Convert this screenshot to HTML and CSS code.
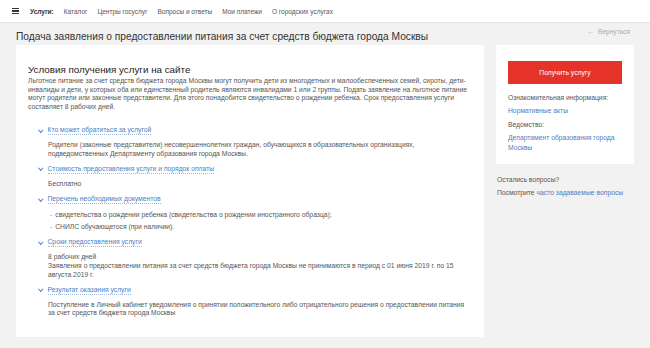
FILE: index.html
```html
<!DOCTYPE html>
<html lang="ru">

<head>
    <meta charset="UTF-8">
    <meta name="viewport" content="width=device-width, initial-scale=1.0">
    <title>Подача заявления о предоставлении питания</title>
    <link rel="stylesheet" href="styles.css">
</head>

<body>
    <div class="topbar">
        <span class="burger"><i></i><i></i><i></i></span>
        <span class="nav-title">Услуги:</span>
        <a class="nav-item">Каталог</a>
        <a class="nav-item">Центры госуслуг</a>
        <a class="nav-item">Вопросы и ответы</a>
        <a class="nav-item">Мои платежи</a>
        <a class="nav-item">О городских услугах</a>
    </div>

    <div class="page">
        <div class="page-head">
            <h1 class="page-title">Подача заявления о предоставлении питания за счет средств бюджета города Москвы</h1>
            <a class="back-link">&larr;&nbsp; Вернуться</a>
        </div>

        <div class="layout">
            <div class="card main-card">
                <h2 class="card-title">Условия получения услуги на сайте</h2>
                <p class="text">Льготное питание за счет средств бюджета города Москвы могут получить дети из многодетных и малообеспеченных семей, сироты, дети-инвалиды и дети, у которых оба или единственный родитель являются инвалидами 1 или 2 группы. Подать заявление на льготное питание могут родители или законные представители. Для этого понадобится свидетельство о рождении ребенка. Срок предоставления услуги составляет 8 рабочих дней.</p>

                <div class="sections">
                    <div class="section">
                        <a class="section-link"><span class="chevron"></span><span class="dotted">Кто может обратиться за услугой</span></a>
                        <p class="section-body">Родители (законные представители) несовершеннолетних граждан, обучающихся в образовательных организациях, подведомственных Департаменту образования города Москвы.</p>
                    </div>
                    <div class="section">
                        <a class="section-link"><span class="chevron"></span><span class="dotted">Стоимость предоставления услуги и порядок оплаты</span></a>
                        <p class="section-body">Бесплатно</p>
                    </div>
                    <div class="section">
                        <a class="section-link"><span class="chevron"></span><span class="dotted">Перечень необходимых документов</span></a>
                        <ul class="doc-list">
                            <li>свидетельства о рождении ребенка (свидетельства о рождении иностранного образца);</li>
                            <li>СНИЛС обучающегося (при наличии).</li>
                        </ul>
                    </div>
                    <div class="section">
                        <a class="section-link"><span class="chevron"></span><span class="dotted">Сроки предоставления услуги</span></a>
                        <p class="section-body">8 рабочих дней<br>Заявления о предоставлении питания за счет средств бюджета города Москвы не принимаются в период с 01 июня 2019 г. по 15 августа 2019 г.</p>
                    </div>
                    <div class="section">
                        <a class="section-link"><span class="chevron"></span><span class="dotted">Результат оказания услуги</span></a>
                        <p class="section-body">Поступление в Личный кабинет уведомления о принятии положительного либо отрицательного решения о предоставлении питания за счет средств бюджета города Москвы</p>
                    </div>
                </div>
            </div>

            <div class="aside">
                <div class="card side-card">
                    <a class="btn-red">Получить услугу</a>
                    <div class="side-label">Ознакомительная информация:</div>
                    <a class="side-link">Нормативные акты</a>
                    <div class="side-label">Ведомство:</div>
                    <a class="side-link">Департамент образования города Москвы</a>
                </div>
                <div class="faq">
                    <div>Остались вопросы?</div>
                    <div class="faq-line">Посмотрите <a class="faq-link">часто задаваемые вопросы</a></div>
                </div>
            </div>
        </div>
    </div>
</body>

</html>
```

FILE: styles.css
```css
body {
    margin: 0;
    background-color: #f2f2f2;
    font-family: "Liberation Sans", Arial, sans-serif;
    color: #333;
    height: 348px;
}

a {
    cursor: pointer;
}

.topbar {
    display: flex;
    align-items: center;
    gap: 10px;
    height: 22px;
    padding: 0 12px;
    background-color: #fff;
    border-bottom: 1px solid #e6e6e6;
    font-size: 6.5px;
}

.burger {
    display: flex;
    flex-direction: column;
    gap: 1.5px;
    width: 7px;
    margin-right: 1px;
}

.burger i {
    display: block;
    height: 1.2px;
    background-color: #333;
}

.nav-title {
    font-weight: bold;
    color: #333;
}

.nav-item {
    color: #555;
}

.page {
    padding: 0 16px;
}

.page-head {
    display: flex;
    justify-content: space-between;
    align-items: flex-start;
    height: 22px;
}

.page-title {
    margin: 7px 0 0;
    font-size: 10.2px;
    line-height: 14px;
    font-weight: normal;
    color: #333;
}

.back-link {
    margin: 5px 4px 0 0;
    font-size: 6.6px;
    color: #aaa;
}

.layout {
    display: grid;
    grid-template-columns: 468px 138px;
    gap: 12px;
    align-items: start;
}

.card {
    background-color: #fff;
}

.main-card {
    padding: 18px 12px 19px;
}

.card-title {
    margin: 0;
    font-size: 9.8px;
    line-height: 13px;
    font-weight: normal;
    color: #222;
}

.text {
    margin: 1px 0 0;
    font-size: 6.75px;
    line-height: 8.7px;
    color: #555;
}

.sections {
    padding-left: 10px;
    margin-top: 14px;
}

.section {
    margin-top: 6.5px;
}

.section-link {
    display: flex;
    align-items: center;
    font-size: 6.75px;
    line-height: 9px;
    color: #4a80c4;
}

.chevron {
    width: 2.5px;
    height: 2.5px;
    border-right: 1px solid #4a80c4;
    border-bottom: 1px solid #4a80c4;
    transform: rotate(45deg);
    margin: -2px 5px 0 1px;
}

.dotted {
    border-bottom: 1px dotted #9dbbe0;
    line-height: 8px;
}

.section-body {
    margin: 6px 0 0 10px;
    font-size: 6.75px;
    line-height: 8.7px;
    color: #555;
}

.doc-list {
    list-style: none;
    margin: 7px 0 0 12px;
    padding: 0;
    font-size: 6.75px;
    line-height: 8.7px;
    color: #555;
}

.doc-list li {
    margin-bottom: 3.3px;
}

.doc-list li::before {
    content: "-";
    color: #999;
    margin-right: 3px;
}

.side-card {
    display: flex;
    flex-direction: column;
    padding: 16px 12px 11px;
    font-size: 6.75px;
    line-height: 10px;
}

.btn-red {
    display: flex;
    align-items: center;
    justify-content: center;
    height: 23px;
    background-color: #e5332a;
    color: #fff;
    margin-bottom: 5px;
}

.side-label {
    color: #555;
    margin-top: 3.5px;
}

.side-link {
    color: #4a80c4;
    margin-top: 3.5px;
}

.faq {
    margin-top: 11px;
    padding-left: 1px;
    font-size: 6.75px;
    line-height: 10px;
    color: #555;
}

.faq-line {
    margin-top: 3px;
}

.faq-link {
    color: #4a80c4;
}
```
